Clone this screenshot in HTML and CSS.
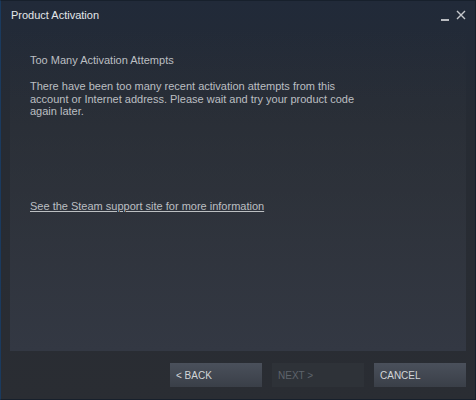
FILE: index.html
```html
<!DOCTYPE html>
<html>
<head>
<meta charset="utf-8">
<link rel="stylesheet" href="styles.css">
</head>
<body>
<div class="window">
  <div class="titlebar">
    <div class="title">Product Activation</div>
    <div class="controls">
      <span class="min"></span>
      <svg class="close" width="10" height="10" viewBox="0 0 10 10"><path d="M1 1 L9 9 M9 1 L1 9" stroke="#c5c8cc" stroke-width="1.4"/></svg>
    </div>
  </div>
  <div class="panel">
    <div class="heading">Too Many Activation Attempts</div>
    <p class="body">There have been too many recent activation attempts from this account or Internet address. Please wait and try your product code again later.</p>
    <a class="link" href="#">See the Steam support site for more information</a>
  </div>
  <div class="footer">
    <button class="btn">&lt; BACK</button>
    <button class="btn disabled">NEXT &gt;</button>
    <button class="btn">CANCEL</button>
  </div>
</div>
</body>
</html>
```
FILE: styles.css
```css
html, body {
  margin: 0;
  padding: 0;
  background: #22262d;
}
.window {
  width: 476px;
  height: 400px;
  box-sizing: border-box;
  border: 1px solid #17202c;
  border-left-color: #1a3a5e;
  background: linear-gradient(to bottom, #212a39 0px, #262b33 120px, #2a2d33 400px);
  display: flex;
  flex-direction: column;
  font-family: "Liberation Sans", Arial, sans-serif;
}
.titlebar {
  height: 29px;
  display: flex;
  justify-content: space-between;
  align-items: flex-start;
  padding: 0 9px 0 10px;
}
.title {
  color: #e4e7ea;
  font-size: 11px;
  margin-top: 8px;
}
.controls {
  display: flex;
  align-items: flex-start;
  gap: 7px;
  margin-top: 9px;
}
.min {
  display: block;
  width: 8px;
  height: 2px;
  background: #b9bcc0;
  margin-top: 9px;
}
.close {
  display: block;
}
.panel {
  flex: 1;
  margin: 0 9px 0 9px;
  padding: 20px 20px 0 20px;
  background: linear-gradient(to bottom, rgba(51,56,65,0) 0%, rgba(51,56,65,0.5) 50%, #333843 100%);
  color: #bcbfc2;
  font-size: 11px;
}
.heading {
  margin-top: 4px;
  line-height: 13px;
}
.body {
  margin: 13px 0 0 0;
  line-height: 12.5px;
  width: 326px;
}
.link {
  display: inline-block;
  margin-top: 82px;
  color: #bcbfc2;
  text-decoration: underline;
}
.footer {
  height: 48px;
  display: flex;
  justify-content: flex-end;
  align-items: center;
  gap: 10px;
  padding: 0 9px 0 0;
}
.btn {
  width: 92px;
  height: 24px;
  border: none;
  padding: 0 0 0 6px;
  text-align: left;
  font-family: "Liberation Sans", Arial, sans-serif;
  font-size: 10px;
  color: #d2d5d8;
  background: linear-gradient(to bottom, #4a505b, #3a3f48);
}
.btn.disabled {
  background: #2e3238;
  color: #5e646c;
}
```
